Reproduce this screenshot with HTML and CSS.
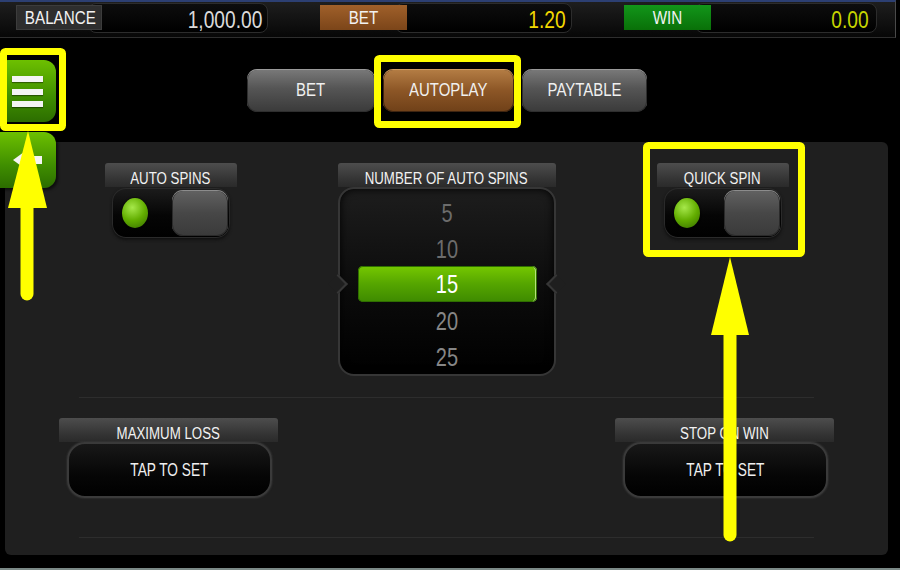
FILE: index.html
```html
<!DOCTYPE html>
<html lang="en">

<head>
  <meta charset="UTF-8" />
  <meta name="viewport" content="width=device-width, initial-scale=1.0" />
  <title>Autoplay</title>
  <link rel="stylesheet" href="styles.css">
</head>

<body>
  <div class="screen">

    <!-- BARRA SUPERIORE -->
    <div class="topbar">
      <div class="stat">
        <span class="stat-label label-balance"><span class="sx">BALANCE</span></span>
        <span class="stat-value value-balance"><span class="sx">1,000.00</span></span>
      </div>
      <div class="stat">
        <span class="stat-label label-bet"><span class="sx">BET</span></span>
        <span class="stat-value value-bet"><span class="sx">1.20</span></span>
      </div>
      <div class="stat">
        <span class="stat-label label-win"><span class="sx">WIN</span></span>
        <span class="stat-value value-win"><span class="sx">0.00</span></span>
      </div>
    </div>

    <!-- PULSANTI LATERALI -->
    <button class="side-btn menu-btn" aria-label="Menu">
      <span></span><span></span><span></span>
    </button>
    <button class="side-btn back-btn" aria-label="Back">
      <svg width="30" height="16" viewBox="0 0 30 16">
        <polygon points="0,8 11,0 11,4 29,4 29,12 11,12 11,16" fill="#f4f4f4" />
      </svg>
    </button>

    <!-- SCHEDE -->
    <div class="tabs">
      <button class="tab tab-bet"><span class="sx">BET</span></button>
      <button class="tab tab-autoplay active"><span class="sx">AUTOPLAY</span></button>
      <button class="tab tab-paytable"><span class="sx">PAYTABLE</span></button>
    </div>

    <!-- PANNELLO -->
    <div class="panel">
      <div class="row-top">
        <div class="option">
          <div class="option-title"><span class="sx">AUTO SPINS</span></div>
          <div class="toggle"><span class="led"></span><span class="knob"></span></div>
        </div>

        <div class="picker-wrap">
          <div class="option-title"><span class="sx">NUMBER OF AUTO SPINS</span></div>
          <div class="picker">
            <div class="num far"><span class="sx">5</span></div>
            <div class="num far"><span class="sx">10</span></div>
            <div class="num sel"><span class="sx">15</span></div>
            <div class="num"><span class="sx">20</span></div>
            <div class="num"><span class="sx">25</span></div>
          </div>
        </div>

        <div class="option">
          <div class="option-title"><span class="sx">QUICK SPIN</span></div>
          <div class="toggle"><span class="led"></span><span class="knob"></span></div>
        </div>
      </div>

      <div class="divider"></div>

      <div class="row-bottom">
        <div class="limit">
          <div class="option-title"><span class="sx">MAXIMUM LOSS</span></div>
          <button class="tap"><span class="sx">TAP TO SET</span></button>
        </div>
        <div class="limit">
          <div class="option-title"><span class="sx">STOP ON WIN</span></div>
          <button class="tap"><span class="sx">TAP TO SET</span></button>
        </div>
      </div>

      <div class="divider divider-last"></div>
    </div>

    <!-- EVIDENZIAZIONI -->
    <svg class="marks" width="900" height="570" viewBox="0 0 900 570">
      <g fill="none" stroke="#ffff00" stroke-width="7">
        <rect x="3.5" y="51.5" width="59" height="76" rx="2" />
        <rect x="377.5" y="58.5" width="140" height="66" rx="2" />
        <rect x="646.5" y="145.5" width="155" height="108" rx="2" />
      </g>
      <g fill="#ffff00">
        <polygon points="28,131 8,208 47,208" />
        <polygon points="730,257 711,335 749,335" />
      </g>
      <g stroke="#ffff00" stroke-linecap="round">
        <line x1="27" y1="206" x2="27" y2="294" stroke-width="13" />
        <line x1="730" y1="333" x2="730" y2="535" stroke-width="13" />
      </g>
    </svg>
  </div>
</body>

</html>
```

FILE: styles.css
```css
* {
  box-sizing: border-box;
}

body {
  margin: 0;
  background-color: #000;
  font-family: "Liberation Sans", Arial, sans-serif;
  color: #ececec;
}

button {
  font-family: inherit;
  color: inherit;
  cursor: pointer;
}

/* testo stretto come nel gioco */
.sx {
  display: inline-block;
  white-space: nowrap;
  transform: scaleX(0.83);
}

.screen {
  position: relative;
  width: 900px;
  height: 570px;
  overflow: hidden;
  background-color: #000;
  border-bottom: 2px solid #7b8987;
}

/* barra superiore */

.topbar {
  display: flex;
  align-items: flex-start;
  gap: 52px;
  height: 38px;
  margin-right: 4px;
  padding: 1px 0 0 16px;
  border-top: 2px solid #2c3f72;
  border-bottom: 1px solid #2e2e2e;
  border-right: 1px solid #4a4a4a;
  background: linear-gradient(#1e1e1e, #070707);
}

.stat {
  display: flex;
  align-items: flex-start;
}

.stat-label {
  position: relative;
  z-index: 1;
  width: 87px;
  height: 25px;
  margin-top: 2px;
  line-height: 26px;
  text-align: center;
  font-size: 19px;
  color: #f2f2f2;
}

.stat-label .sx {
  transform: scaleX(0.8);
}

.label-balance {
  width: 86px;
  background-color: #2e2e2e;
  box-shadow: inset 0 0 0 1px #3c3c3c;
}

.label-bet {
  background: linear-gradient(#a0602a, #7b4519);
}

.label-win {
  background: linear-gradient(#12961a, #097008);
}

.stat-value {
  height: 30px;
  padding-right: 5px;
  line-height: 31px;
  text-align: right;
  font-size: 24px;
  border: 1px solid #2c2c2c;
  border-radius: 8px;
  background: linear-gradient(#0d0d0d, #000);
}

.stat-value .sx {
  transform: scaleX(0.8);
  transform-origin: right center;
}

.value-balance {
  width: 180px;
  margin-left: -14px;
  color: #dadada;
}

.value-bet {
  width: 177px;
  margin-left: -12px;
  color: #f2d800;
}

.value-win {
  width: 182px;
  margin-left: -16px;
  padding-right: 7px;
  color: #c6d500;
}

/* pulsanti laterali */

.side-btn {
  position: absolute;
  left: 0;
  border: none;
  padding: 0;
  background: linear-gradient(#6dc000, #3f8e00 60%, #2c6d00);
  box-shadow: 2px 2px 3px rgba(0, 0, 0, 0.6);
}

.menu-btn {
  top: 60px;
  left: 4px;
  width: 52px;
  height: 62px;
  display: flex;
  flex-direction: column;
  gap: 6.5px;
  padding: 16px 0 0 8px;
  border-radius: 4px 12px 12px 4px;
}

.menu-btn span {
  display: block;
  width: 31px;
  height: 6px;
  background-color: #f4f4f4;
  box-shadow: 0 1px 1px rgba(0, 0, 0, 0.4);
}

.back-btn {
  top: 132px;
  width: 56px;
  height: 56px;
  border-radius: 0 12px 12px 0;
  z-index: 2;
}

.back-btn svg {
  display: block;
  margin-left: 13px;
}

/* schede */

.tabs {
  display: flex;
  gap: 8px;
  margin-top: 31px;
  padding-left: 247px;
}

.tab {
  height: 43px;
  padding: 0;
  border: none;
  border-radius: 10px;
  font-size: 18px;
  color: #f0f0f0;
  background: linear-gradient(#7a7a7a, #555 45%, #3a3a3a);
  box-shadow: inset 0 1px 0 #9a9a9a, inset 0 0 0 1px #2e2e2e;
}

.tab-bet {
  width: 128px;
}

.tab-autoplay {
  width: 131px;
}

.tab-paytable {
  width: 125px;
}

.tab.active {
  background: linear-gradient(#b57e45, #8c5626 50%, #6f4018);
  box-shadow: inset 0 1px 0 #d09a60, inset 0 0 0 1px #3e2410;
}

/* pannello */

.panel {
  width: 883px;
  height: 413px;
  margin: 30px 0 0 5px;
  padding-top: 21px;
  border-radius: 6px;
  background-color: #1f1f1f;
}

.row-top {
  display: flex;
  justify-content: center;
  align-items: flex-start;
  gap: 101px;
}

.option {
  width: 132px;
}

.option-title {
  height: 24px;
  line-height: 31px;
  text-align: center;
  font-size: 16px;
  color: #f2f2f2;
  border-radius: 3px 3px 0 0;
  background: linear-gradient(#4d4d4d, #333 70%, #2a2a2a);
}

.toggle {
  display: flex;
  align-items: center;
  justify-content: space-between;
  width: 118px;
  height: 50px;
  margin: 1px auto 0;
  padding: 0 2px 0 10px;
  border-radius: 14px;
  background: linear-gradient(#1c1c1c, #050505 55%, #000);
  box-shadow: inset 0 0 0 1px #2a2a2a, 0 2px 3px #111;
}

.led {
  width: 26px;
  height: 30px;
  border-radius: 50%;
  background: radial-gradient(circle at 40% 32%, #a6e84a, #62ad00 50%, #356b00);
  box-shadow: 0 0 2px #000;
}

.knob {
  width: 56px;
  height: 46px;
  border-radius: 11px;
  background: linear-gradient(#626262, #474747 50%, #3a3a3a);
  box-shadow: inset 0 1px 0 #8c8c8c, inset 0 0 0 1px #2a2a2a;
}

.picker-wrap {
  width: 218px;
}

.picker {
  position: relative;
  height: 189px;
  padding-top: 6px;
  border: 2px solid #363636;
  border-radius: 16px;
  background: linear-gradient(#1d1d1d, #0b0b0b 55%, #000);
  box-shadow: inset 0 0 8px #000;
}

.picker::before,
.picker::after {
  content: "";
  position: absolute;
  top: 88px;
  width: 12px;
  height: 12px;
  background-color: #1f1f1f;
  border: 2px solid #363636;
  transform: rotate(45deg);
}

.picker::before {
  left: -9px;
  border-left: none;
  border-bottom: none;
}

.picker::after {
  right: -9px;
  border-right: none;
  border-top: none;
}

.num {
  height: 36px;
  line-height: 37px;
  text-align: center;
  font-size: 25px;
  color: #868686;
}

.num .sx {
  transform: scaleX(0.8);
}

.num.far {
  color: #6c6c6c;
}

.num.sel {
  margin: -1px 17px 1px 18px;
  border-radius: 5px;
  color: #fff;
  background: linear-gradient(#76c800, #55a500 50%, #3e8a00);
  box-shadow: inset 0 0 0 1px #2f6e00, inset -2px 0 0 #b5e37a;
}

.divider {
  width: 735px;
  height: 1px;
  margin: 21px auto 0;
  background-color: #2d2d2d;
}

.divider-last {
  margin-top: 39px;
}

.row-bottom {
  display: flex;
  justify-content: space-between;
  margin-top: 20px;
  padding: 0 54px;
}

.limit {
  width: 219px;
}

.tap {
  display: block;
  width: 205px;
  height: 56px;
  margin-left: 8px;
  padding: 0;
  border: 2px solid #3a3a3a;
  border-radius: 18px;
  font-size: 18px;
  color: #f0f0f0;
  background: linear-gradient(#181818, #060606 60%, #000);
  box-shadow: 0 0 2px #444;
}

.tap .sx {
  transform: scaleX(0.76);
}

/* evidenziazioni */

.marks {
  position: absolute;
  top: 0;
  left: 0;
  z-index: 5;
  pointer-events: none;
}
```
